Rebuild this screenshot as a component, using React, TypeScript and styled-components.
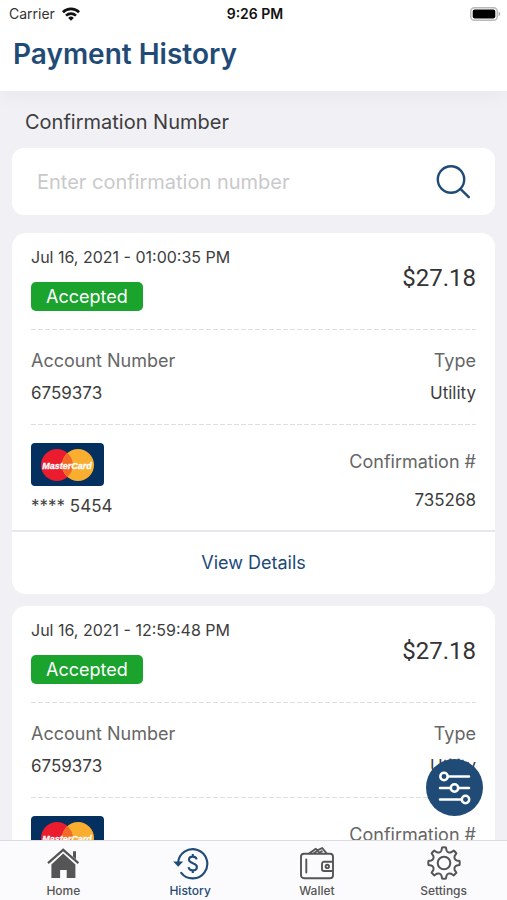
import React, { useState } from "react";
import styled, { createGlobalStyle } from "styled-components";

const navy = "#20497a";
const blue = "#1f4b76";

const GlobalStyle = createGlobalStyle`
  *, *::before, *::after { box-sizing: border-box; }
  body { margin: 0; background: #f0f0f5; }
  button, input { font: inherit; }
`;

const Screen = styled.div`
  position: relative;
  display: flex;
  flex-direction: column;
  height: 100vh;
  overflow: hidden;
  background: #f0f0f5;
  color: #3d3d3d;
  font-family: Inter, "Open Sans", sans-serif;
  font-size: 17px;
  line-height: 24px;
`;

const Header = styled.header`
  flex: none;
  background: #fff;
  padding-bottom: 18px;
  box-shadow: 0 4px 20px rgba(0, 0, 0, 0.04);
  z-index: 1;
`;

const StatusBar = styled.div`
  display: grid;
  grid-template-columns: 1fr auto 1fr;
  align-items: center;
  height: 27px;
  padding: 0 6px 0 9px;
  color: #111;
  font-size: 14px;
`;

const Carrier = styled.span`
  display: flex;
  align-items: center;
  gap: 7px;
  color: #333;
`;

const Clock = styled.span`
  font-size: 14px;
  font-weight: 600;
`;

const BatterySlot = styled.span`
  display: flex;
  justify-content: flex-end;
`;

const Title = styled.h1`
  margin: 8px 0 0;
  padding-left: 13px;
  color: ${blue};
  font-size: 28px;
  font-weight: 600;
  line-height: 38px;
`;

const Content = styled.main`
  flex: 1;
  min-height: 0;
  overflow-y: auto;
  scrollbar-width: none;
  padding: 19px 12px 0;
`;

const SearchLabel = styled.label`
  display: block;
  padding: 0 13px;
  font-size: 20px;
`;

const SearchBox = styled.form`
  display: flex;
  align-items: center;
  height: 67px;
  margin: 14px 0 18px;
  padding: 0 23px 0 25px;
  border-radius: 12px;
  background: #fff;
`;

const SearchInput = styled.input`
  flex: 1;
  min-width: 0;
  border: 0;
  padding: 0;
  outline: none;
  background: transparent;
  font-size: 20px;
  &::placeholder { color: #c9c9cb; opacity: 1; }
`;

const IconButton = styled.button`
  display: flex;
  padding: 0;
  border: 0;
  background: none;
  color: ${blue};
  cursor: pointer;
`;

const Card = styled.article`
  margin-bottom: 12px;
  border-radius: 14px;
  background: #fff;
`;

const Section = styled.section<{ $top: number; $bottom: number; $dashed?: boolean }>`
  display: flex;
  justify-content: space-between;
  margin: 0 19px;
  padding: ${(p) => p.$top}px 0 ${(p) => p.$bottom}px;
  ${(p) =>
    p.$dashed &&
    "background: repeating-linear-gradient(90deg, #dedede 0 5px, transparent 5px 7px) bottom / 100% 1px no-repeat;"}
`;

const Stack = styled.div<{ $gap: number; $end?: boolean; $top?: number }>`
  display: flex;
  flex-direction: column;
  align-items: ${(p) => (p.$end ? "flex-end" : "flex-start")};
  gap: ${(p) => p.$gap}px;
  padding-top: ${(p) => p.$top ?? 0}px;
`;

const DateText = styled.time`
  font-size: 16px;
`;

const Badge = styled.span`
  height: 29px;
  padding: 0 15px;
  border-radius: 5px;
  background: #1aa32d;
  color: #fff;
  font-size: 18px;
  line-height: 29px;
`;

const Amount = styled.strong`
  padding-top: 17px;
  color: #333;
  font-family: Roboto, sans-serif;
  font-size: 24px;
  font-weight: 400;
  line-height: 32px;
`;

const FieldName = styled.span`
  color: #666;
  font-size: 18px;
`;

const DetailsButton = styled.button`
  display: block;
  width: 100%;
  height: 64px;
  padding: 0;
  border: 0;
  border-top: 2px solid #e8e8ec;
  background: none;
  color: ${navy};
  font-size: 18px;
  cursor: pointer;
`;

const Fab = styled.button`
  position: absolute;
  right: 24px;
  bottom: 84px;
  display: flex;
  align-items: center;
  justify-content: center;
  width: 57px;
  height: 57px;
  padding: 0;
  border: 0;
  border-radius: 50%;
  background: ${blue};
  color: #fff;
  cursor: pointer;
`;

const TabBar = styled.nav`
  flex: none;
  display: grid;
  grid-template-columns: repeat(4, 1fr);
  height: 60px;
  border-top: 1px solid #dddde1;
  background: #fbfbfd;
`;

const Tab = styled.a<{ $active?: boolean }>`
  display: flex;
  flex-direction: column;
  align-items: center;
  gap: 3px;
  padding-top: 5px;
  color: ${(p) => (p.$active ? blue : "#555")};
  font-size: 12px;
  font-weight: 500;
  line-height: 16px;
  text-decoration: none;
`;

const WifiIcon = () => (
  <svg width="18" height="14" viewBox="0 0 18 14" aria-hidden="true">
    <g fill="none" stroke="#111" strokeWidth="2.6">
      <path d="M.9 5.2a11.6 11.6 0 0 1 16.2 0" />
      <path d="M4 8.6a7.2 7.2 0 0 1 10 0" />
    </g>
    <path d="M9 13.8 6.2 10.9a4 4 0 0 1 5.6 0z" fill="#111" />
  </svg>
);

const BatteryIcon = () => (
  <svg width="31" height="14" viewBox="0 0 31 14" aria-hidden="true">
    <rect x=".8" y=".8" width="26.4" height="12.4" rx="3.5" fill="#fff" stroke="#b8b8b8" strokeWidth="1.4" />
    <rect x="2.7" y="2.6" width="22.6" height="8.8" rx="1.8" fill="#000" />
    <path d="M28.6 4.8c2.2.7 2.2 3.7 0 4.4z" fill="#aaa" />
  </svg>
);

const SearchIcon = () => (
  <svg width="38" height="38" viewBox="0 0 38 38" fill="none" stroke="currentColor" strokeWidth="2.4" strokeLinecap="round" aria-hidden="true">
    <circle cx="17" cy="16.5" r="13.2" />
    <path d="m26.4 25.9 8.4 8.3" />
  </svg>
);

const MasterCardLogo = () => (
  <svg width="73" height="43" viewBox="0 0 73 43" role="img" aria-label="MasterCard">
    <rect width="73" height="43" rx="4" fill="#04305f" />
    <circle cx="26" cy="22" r="16" fill="#ea1c2d" />
    <circle cx="47" cy="22" r="16" fill="#f9ae30" />
    <path d="M36.5 10a16 16 0 0 1 0 24 16 16 0 0 1 0-24z" fill="#f26a27" />
    <text x="36" y="25.5" textAnchor="middle" fill="#fff" stroke="#fff" strokeWidth=".3" fontFamily="'Liberation Sans', sans-serif" fontSize="9" fontWeight="700" fontStyle="italic">
      MasterCard
    </text>
  </svg>
);

const SlidersIcon = () => (
  <svg width="33" height="34" viewBox="0 0 33 34" fill="none" stroke="currentColor" strokeWidth="2.5" strokeLinecap="round" aria-hidden="true">
    <circle cx="6" cy="5.5" r="3.7" />
    <path d="M10 5.5h21M2 17h10M21 17h10M2 28.5h21" />
    <circle cx="16.5" cy="17" r="3.7" />
    <circle cx="27.5" cy="28.5" r="3.7" />
  </svg>
);

const HomeIcon = () => (
  <svg width="34" height="34" viewBox="0 0 34 34" fill="none" aria-hidden="true">
    <path d="M2 17.2 17.2 3.8l15.2 13.4" stroke="currentColor" strokeWidth="2.2" />
    <path d="M27 5.2h3v8l-3-2.6z" fill="currentColor" />
    <path d="M17.2 7.6 29.4 18.4V32h-8.7v-8h-6.6v8H5.4V18.4z" fill="currentColor" />
  </svg>
);

const HistoryIcon = () => (
  <svg width="38" height="34" viewBox="0 0 38 34" fill="none" stroke="currentColor" strokeWidth="2.1" aria-hidden="true">
    <path d="M7.1 17A14.6 14.6 0 1 1 10.2 26.8" strokeLinecap="round" />
    <path d="M2.2 15.4h10L7.2 20.8z" fill="currentColor" stroke="none" />
    <path d="M25.6 13.4c-.3-1.8-1.7-2.8-3.8-2.8-2.2 0-3.8 1.1-3.8 3.1 0 4.3 7.9 2.7 7.9 7.2 0 2.2-1.7 3.4-4.1 3.4-2.3 0-4-1.1-4.2-3.2M21.8 8v2.6M21.8 24.3V27" strokeWidth="2.1" />
  </svg>
);

const WalletIcon = () => (
  <svg width="36" height="34" viewBox="0 0 36 34" fill="none" stroke="currentColor" strokeWidth="1.9" strokeLinejoin="round" aria-hidden="true">
    <rect x="2" y="7.8" width="32" height="24.4" rx="3" />
    <path d="M7.3 13.5v13" strokeLinecap="round" />
    <path d="M34 15.8h-9a2 2 0 0 0-2 2V23a2 2 0 0 0 2 2h9" />
    <circle cx="28.3" cy="20.4" r="1.7" />
    <path d="m10 7.6 6.8-4.8 4.6 4.8M14.6 7.6 18 5M18.4 4.4l4.8-2.4 4.6 5.6M21.2 6l2.4-.8" />
  </svg>
);

const gearPath = (() => {
  const c = 17;
  const pt = (r: number, deg: number) => {
    const a = (deg * Math.PI) / 180;
    return `${(c + r * Math.sin(a)).toFixed(2)} ${(c - r * Math.cos(a)).toFixed(2)}`;
  };
  let d = `M${pt(15.7, -7)}`;
  for (let i = 0; i < 8; i++) {
    const a = i * 45;
    d += `Q${pt(15.9, a)} ${pt(15.7, a + 7)}L${pt(13, a + 11)}C${pt(11.2, a + 17)} ${pt(11.2, a + 28)} ${pt(13, a + 34)}L${pt(15.7, a + 38)}`;
  }
  return d + "Z";
})();

const GearIcon = () => (
  <svg width="34" height="34" viewBox="0 0 34 34" fill="none" stroke="currentColor" strokeWidth="2" strokeLinejoin="round" aria-hidden="true">
    <path d={gearPath} />
    <circle cx="17" cy="17" r="6.3" />
  </svg>
);

const payments = [
  { date: "Jul 16, 2021 - 01:00:35 PM", amount: "$27.18", account: "6759373", type: "Utility", card: "**** 5454", confirmation: "735268" },
  { date: "Jul 16, 2021 - 12:59:48 PM", amount: "$27.18", account: "6759373", type: "Utility", card: "**** 5454", confirmation: "735267" },
];

const tabs = [
  { name: "Home", Icon: HomeIcon },
  { name: "History", Icon: HistoryIcon },
  { name: "Wallet", Icon: WalletIcon },
  { name: "Settings", Icon: GearIcon },
];

function PaymentCard({ payment }: { payment: (typeof payments)[number] }) {
  return (
    <Card>
      <Section $top={12} $bottom={19} $dashed>
        <Stack $gap={13}>
          <DateText>{payment.date}</DateText>
          <Badge>Accepted</Badge>
        </Stack>
        <Amount>{payment.amount}</Amount>
      </Section>
      <Section $top={19} $bottom={20} $dashed>
        <Stack $gap={8}>
          <FieldName>Account Number</FieldName>
          <span>{payment.account}</span>
        </Stack>
        <Stack $gap={8} $end>
          <FieldName>Type</FieldName>
          <span>{payment.type}</span>
        </Stack>
      </Section>
      <Section $top={18} $bottom={12}>
        <Stack $gap={8}>
          <MasterCardLogo />
          <span>{payment.card}</span>
        </Stack>
        <Stack $gap={14} $top={7} $end>
          <FieldName>Confirmation #</FieldName>
          <span>{payment.confirmation}</span>
        </Stack>
      </Section>
      <DetailsButton type="button">View Details</DetailsButton>
    </Card>
  );
}

export default function App() {
  const [query, setQuery] = useState("");
  return (
    <Screen>
      <GlobalStyle />
      <Header>
        <StatusBar>
          <Carrier>
            Carrier <WifiIcon />
          </Carrier>
          <Clock>9:26 PM</Clock>
          <BatterySlot>
            <BatteryIcon />
          </BatterySlot>
        </StatusBar>
        <Title>Payment History</Title>
      </Header>
      <Content>
        <SearchLabel htmlFor="confirmation">Confirmation Number</SearchLabel>
        <SearchBox onSubmit={(e) => e.preventDefault()}>
          <SearchInput
            id="confirmation"
            placeholder="Enter confirmation number"
            value={query}
            onChange={(e) => setQuery(e.target.value)}
          />
          <IconButton type="submit" aria-label="Search">
            <SearchIcon />
          </IconButton>
        </SearchBox>
        {payments.map((payment) => (
          <PaymentCard key={payment.date} payment={payment} />
        ))}
      </Content>
      <Fab type="button" aria-label="Filter payments">
        <SlidersIcon />
      </Fab>
      <TabBar>
        {tabs.map(({ name, Icon }) => (
          <Tab key={name} href={`#${name.toLowerCase()}`} $active={name === "History"}>
            <Icon />
            {name}
          </Tab>
        ))}
      </TabBar>
    </Screen>
  );
}
